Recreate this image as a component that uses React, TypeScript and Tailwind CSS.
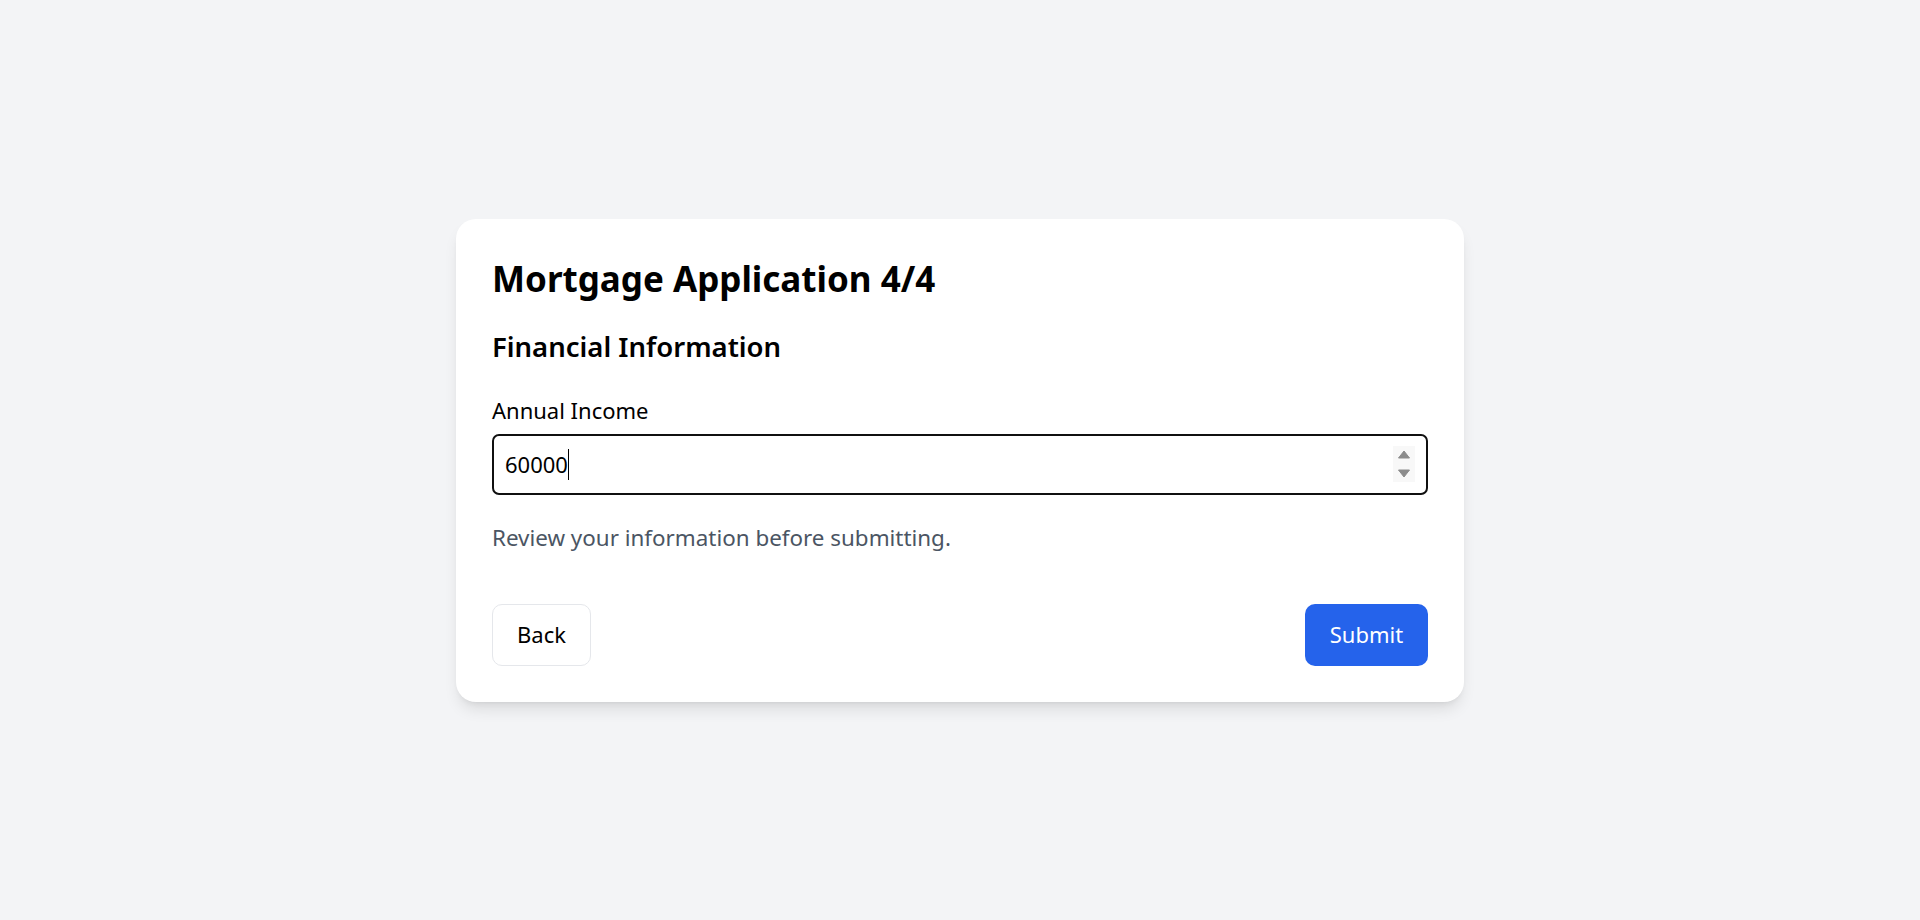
export default function App() {
  return (
    <div className="flex min-h-screen items-center justify-center bg-[#f3f4f6] font-['Segoe_UI','Noto_Sans',sans-serif]">
      <div className="w-[1008px] rounded-[20px] bg-white p-9 shadow-lg">
        <h1 className="text-[35px] font-bold leading-[48px] text-black">Mortgage Application 4/4</h1>
        <h2 className="mt-6 text-[27.5px] font-semibold leading-[40px] text-black">Financial Information</h2>

        <label className="mt-[28px] block text-[22px] leading-[30px] text-black">Annual Income</label>
        <div className="mt-[9px] flex h-[61px] items-center justify-between rounded-[7px] border-2 border-[#101010] px-[11px]">
          <div className="flex items-center">
            <span className="text-[22px] leading-[28px] text-black">60000</span>
            <span className="h-[31px] w-px bg-black" />
          </div>
          <div className="flex h-[36px] w-[22px] items-center justify-center bg-[#f8f8f8]">
            <svg width="22" height="36" viewBox="0 0 22 36">
              <path d="M11 5 L16.5 12 L5.5 12 Z" fill="#8c8c8c" stroke="#8c8c8c" strokeWidth="1" strokeLinejoin="round" />
              <path d="M5.5 24 L16.5 24 L11 31 Z" fill="#8c8c8c" stroke="#8c8c8c" strokeWidth="1" strokeLinejoin="round" />
            </svg>
          </div>
        </div>

        <p className="mt-[28px] text-[22.4px] leading-[30px] text-[#4b5563]">Review your information before submitting.</p>

        <div className="mt-[51px] flex items-center justify-between">
          <button className="h-[62px] w-[99px] rounded-[10px] border border-[#e5e7eb] bg-white text-[22px] text-black">
            Back
          </button>
          <button className="h-[62px] w-[123px] rounded-[10px] bg-[#2563eb] text-[22px] text-white">
            Submit
          </button>
        </div>
      </div>
    </div>
  );
}
